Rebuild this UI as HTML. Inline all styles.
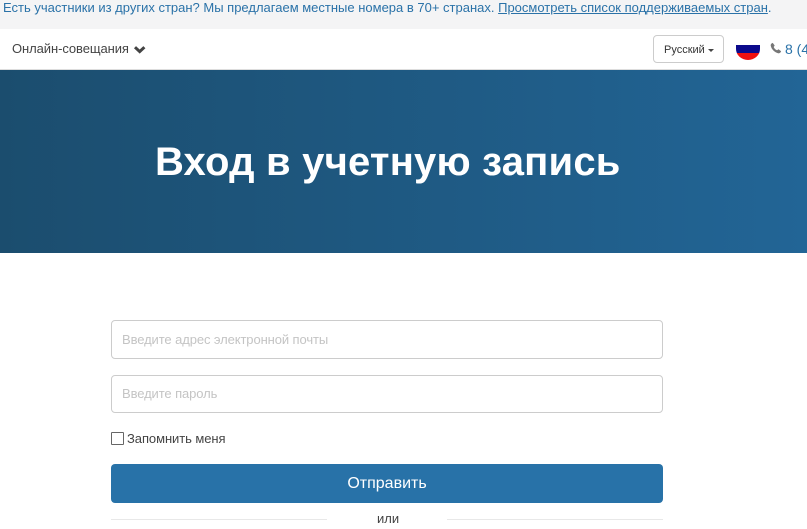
<!DOCTYPE html>
<html lang="ru"><head><meta charset="utf-8"><style>
html,body{margin:0;padding:0;background:#fff}
body{width:807px;height:529px;overflow:hidden;position:relative;font-family:"Liberation Sans",Arial,sans-serif}
.a{position:absolute;white-space:nowrap}
</style></head><body>
<div class="a" style="left:0;top:0;width:807px;height:29px;background:#f4f4f5"></div>
<div class="a" style="left:3px;top:0;font-size:13px;line-height:16px;color:#2a72a8;">Есть участники из других стран? Мы предлагаем местные номера в 70+ странах. <span style="text-decoration:underline">Просмотреть список поддерживаемых стран</span>.</div>
<div class="a" style="left:12px;top:41px;font-size:13px;line-height:16px;color:#444;letter-spacing:-.08px">Онлайн-совещания</div>
<svg class="a" style="left:133px;top:44px" width="14" height="11" viewBox="0 0 14 11"><path d="M2 3.2L6.7 7.6L11.4 3.2" fill="none" stroke="#444" stroke-width="3"/></svg>
<div class="a" style="left:653px;top:35px;width:69px;height:26px;border:1px solid #ccc;border-radius:4px;background:#fff"></div>
<div class="a" style="left:664px;top:43px;font-size:11px;line-height:14px;color:#333">Русский</div>
<div class="a" style="left:708px;top:49px;width:0;height:0;border-top:3px solid #444;border-left:3px solid transparent;border-right:3px solid transparent"></div>
<svg class="a" style="left:736px;top:39px" width="24" height="22" viewBox="0 0 24 22"><defs><clipPath id="c"><path d="M0 0H24V10A12 11 0 0 1 0 10Z"/></clipPath></defs><g clip-path="url(#c)"><rect width="24" height="6" fill="#fff"/><rect y="6" width="24" height="8" fill="#0b0a8c"/><rect y="14" width="24" height="8" fill="#f01010"/></g></svg>
<svg class="a" style="left:770px;top:42px" width="12" height="12" viewBox="0 0 11 11"><path d="M2.5 0.8L4.3 3.2L3.4 4.6C4 6 5 7 6.5 7.6L7.8 6.7L10.2 8.5C9.7 10 8.6 10.6 7.4 10.3C4 9.4 1.6 7 0.7 3.6C0.4 2.4 1 1.3 2.5 0.8Z" fill="#777"/></svg>
<div class="a" style="left:785px;top:41px;font-size:14px;line-height:16px;color:#2a72a8">8 (4</div>
<div class="a" style="left:0;top:69px;width:807px;height:1px;background:#ddd"></div>
<div class="a" style="left:0;top:70px;width:807px;height:183px;background:linear-gradient(90deg,#1b4d6e 0%,#226596 100%)"></div>
<div class="a" style="left:155px;top:138px;font-size:40px;line-height:48px;font-weight:bold;color:#fff;letter-spacing:.2px">Вход в учетную запись</div>
<div class="a" style="left:111px;top:320px;width:550px;height:37px;border:1px solid #ccc;border-radius:4px"></div>
<div class="a" style="left:122px;top:332px;font-size:13px;line-height:16px;color:#c4c4c4;letter-spacing:-.1px">Введите адрес электронной почты</div>
<div class="a" style="left:111px;top:375px;width:550px;height:36px;border:1px solid #ccc;border-radius:4px"></div>
<div class="a" style="left:122px;top:386px;font-size:13px;line-height:16px;color:#c4c4c4;letter-spacing:-.1px">Введите пароль</div>
<div class="a" style="left:111px;top:432px;width:11px;height:11px;border:1px solid #666;border-radius:1px"></div>
<div class="a" style="left:127px;top:431px;font-size:13px;line-height:16px;color:#444;letter-spacing:-.07px">Запомнить меня</div>
<div class="a" style="left:111px;top:464px;width:552px;height:39px;background:#2872a8;border-radius:4px;color:#fff;font-size:16px;line-height:39px;text-align:center">Отправить</div>
<div class="a" style="left:111px;top:519px;width:216px;height:1px;background:#e8e8e8"></div>
<div class="a" style="left:447px;top:519px;width:216px;height:1px;background:#e8e8e8"></div>
<div class="a" style="left:377px;top:511px;font-size:13px;line-height:16px;color:#444">или</div>
</body></html>
